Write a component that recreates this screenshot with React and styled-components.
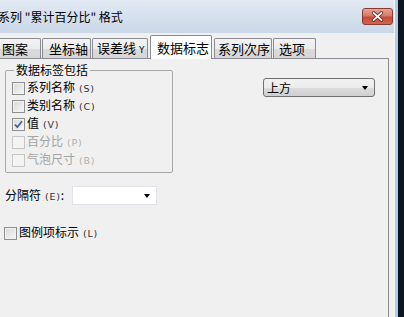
import { createGlobalStyle, styled } from "styled-components";

const GlobalStyle = createGlobalStyle`
  html, body {
    margin: 0;
    padding: 0;
    background: #f0f0f0;
  }
  body {
    font-family: "Noto Sans CJK SC", "Noto Sans", sans-serif;
    font-size: 12px;
    color: #000;
  }
`;

const Window = styled.div`
  width: 404px;
  height: 317px;
  display: flex;
  overflow: hidden;
`;

const Main = styled.div`
  width: 394px;
  display: flex;
  flex-direction: column;
`;

const RightFrame = styled.div`
  width: 10px;
  background: linear-gradient(
    to right,
    #f4f7fb 0 1px,
    #aecbe8 1px 4px,
    #0c1622 4px
  );
`;

const TitleBar = styled.div`
  height: 33px;
  flex: none;
  display: flex;
  align-items: center;
  background: linear-gradient(#e2eaf4, #c9d7e7);
`;

const Title = styled.div`
  margin-left: -2px;
  margin-top: 1px;
  font-size: 12px;
  line-height: 14px;
  white-space: nowrap;
`;

const CloseButton = styled.div`
  margin-left: auto;
  margin-right: 1px;
  margin-top: -1px;
  width: 31px;
  height: 17px;
  box-sizing: border-box;
  border: 1px solid #8b3b32;
  border-radius: 3px;
  background: linear-gradient(#e6a595 0%, #d67a68 45%, #c74b38 55%, #d0654f 100%);
  display: flex;
  align-items: center;
  justify-content: center;
`;

const Client = styled.div`
  flex: 1;
  background: #f0f0f0;
  overflow: hidden;
`;

const TabControl = styled.div`
  margin: 2px 5px 0 -5px;
  display: flex;
  flex-direction: column;
`;

const TabStrip = styled.div`
  height: 23px;
  display: flex;
  align-items: flex-end;
  gap: 1px;
  position: relative;
  z-index: 1;
`;

const Tab = styled.div`
  width: ${(p) => p.$w}px;
  height: ${(p) => (p.$sel ? 24 : 20)}px;
  margin: 0 ${(p) => (p.$sel ? "1px" : "0")} ${(p) => (p.$sel ? "-1px" : "0")};
  box-sizing: border-box;
  border: 1px solid #898c95;
  border-bottom: none;
  border-radius: 2px 2px 0 0;
  padding-left: ${(p) => p.$pl}px;
  display: flex;
  align-items: center;
  font-size: 13px;
  line-height: 14px;
  white-space: nowrap;
  overflow: hidden;
  background: ${(p) =>
    p.$sel ? "#ffffff" : "linear-gradient(#f3f3f3, #ebebeb 50%, #dcdcdc 51%, #d6d6d6)"};
  padding-top: ${(p) => (p.$sel ? 0 : 1)}px;
`;

const TabSuffix = styled.span`
  font-family: "DejaVu Sans", sans-serif;
  font-size: 9px;
  margin-left: 3px;
`;

const Panel = styled.div`
  margin-left: 3px;
  height: 280px;
  border: 1px solid #898c95;
  padding: 5px 0 0 6px;
  box-sizing: border-box;
  background: #f0f0f0;
`;

const TopRow = styled.div`
  display: flex;
  align-items: flex-start;
`;

const GroupBox = styled.fieldset`
  margin: 0;
  width: 168px;
  box-sizing: border-box;
  padding: 3px 0 3px 6px;
  border: 1px solid #a9a9a9;
  border-radius: 2px;
  min-width: 0;
`;

const GroupTitle = styled.legend`
  margin-left: 2px;
  padding: 0 2px;
  font-size: 12px;
  line-height: 12px;
`;

const CheckRow = styled.div`
  height: 18px;
  display: flex;
  align-items: center;
  gap: 2px;
  color: ${(p) => (p.$disabled ? "#a3a3a3" : "#000")};
  font-size: 12px;
  line-height: 14px;
  white-space: nowrap;
`;

const Box = styled.span`
  width: 13px;
  height: 13px;
  box-sizing: border-box;
  flex: none;
  border: 1px solid ${(p) => (p.$disabled ? "#c6c6c6" : "#8e8f8f")};
  background: ${(p) =>
    p.$disabled ? "#f4f4f4" : "linear-gradient(135deg, #d9d9d9, #f7f7f7)"};
  box-shadow: inset 0 0 0 1px ${(p) => (p.$disabled ? "#f4f4f4" : "#f2f2f2")};
  display: flex;
  align-items: center;
  justify-content: center;
`;

const Key = styled.span`
  font-family: "DejaVu Sans", sans-serif;
  font-size: 9.5px;
  letter-spacing: 0.8px;
  margin-left: 4px;
  color: ${(p) => (p.$disabled ? "#b0b0b0" : "#333")};
`;

const PositionSelect = styled.div`
  margin: 14px 13px 0 auto;
  width: 112px;
  height: 19px;
  box-sizing: border-box;
  border: 1px solid #707070;
  border-radius: 3px;
  background: linear-gradient(#f2f2f2, #ebebeb 50%, #dddddd 51%, #cfcfcf);
  display: flex;
  align-items: center;
  padding: 0 6px 0 3px;
  font-size: 12px;
  line-height: 14px;
`;

const Arrow = styled.span`
  margin-left: auto;
  width: 0;
  height: 0;
  border-left: 3.5px solid transparent;
  border-right: 3.5px solid transparent;
  border-top: 4px solid #000;
`;

const SepRow = styled.div`
  margin-top: 13px;
  display: flex;
  align-items: center;
`;

const SepLabel = styled.div`
  width: 67px;
  font-size: 12px;
  line-height: 14px;
  white-space: nowrap;
`;

const SepSelect = styled.div`
  width: 85px;
  height: 19px;
  box-sizing: border-box;
  border: 1px solid #e2e3ea;
  background: #ffffff;
  display: flex;
  align-items: center;
  padding: 0 6px 0 3px;
`;

const LegendRow = styled(CheckRow)`
  margin-top: 19px;
  margin-left: -1px;
`;

function CheckBox({ checked, disabled }) {
  return (
    <Box $disabled={disabled}>
      {checked && (
        <svg width="11" height="11" viewBox="0 0 11 11">
          <path d="M2 5.5 L4.3 8.2 L9 2.3" fill="none" stroke="#4a5e9c" strokeWidth="1.8" />
        </svg>
      )}
    </Box>
  );
}

const tabs = [
  { label: "图案", w: 46, pl: 6 },
  { label: "坐标轴", w: 49, pl: 6 },
  { label: "误差线", suffix: "Y", w: 56, pl: 4 },
  { label: "数据标志", w: 62, pl: 6, sel: true },
  { label: "系列次序", w: 58, pl: 3 },
  { label: "选项", w: 43, pl: 5 },
];

const items = [
  { label: "系列名称", key: "(S)" },
  { label: "类别名称", key: "(C)" },
  { label: "值", key: "(V)", checked: true },
  { label: "百分比", key: "(P)", disabled: true },
  { label: "气泡尺寸", key: "(B)", disabled: true },
];

export default function App() {
  return (
    <>
      <GlobalStyle />
      <Window>
        <Main>
          <TitleBar>
            <Title>系列 "累计百分比" 格式</Title>
            <CloseButton>
              <svg width="13" height="11" viewBox="0 0 13 11">
                <path
                  d="M2.5 1.8 L10.5 9.2 M10.5 1.8 L2.5 9.2"
                  stroke="#6a2a20"
                  strokeWidth="3.4"
                  strokeLinecap="round"
                />
                <path
                  d="M2.5 1.8 L10.5 9.2 M10.5 1.8 L2.5 9.2"
                  stroke="#ffffff"
                  strokeWidth="1.8"
                  strokeLinecap="round"
                />
              </svg>
            </CloseButton>
          </TitleBar>
          <Client>
            <TabControl>
              <TabStrip>
                {tabs.map((t) => (
                  <Tab key={t.label} $w={t.w} $pl={t.pl} $sel={t.sel}>
                    <span>
                      {t.label}
                      {t.suffix && <TabSuffix>{t.suffix}</TabSuffix>}
                    </span>
                  </Tab>
                ))}
              </TabStrip>
              <Panel>
                <TopRow>
                  <GroupBox>
                    <GroupTitle>数据标签包括</GroupTitle>
                    {items.map((it) => (
                      <CheckRow key={it.label} $disabled={it.disabled}>
                        <CheckBox checked={it.checked} disabled={it.disabled} />
                        <span>
                          {it.label}
                          <Key $disabled={it.disabled}>{it.key}</Key>
                        </span>
                      </CheckRow>
                    ))}
                  </GroupBox>
                  <PositionSelect>
                    上方
                    <Arrow />
                  </PositionSelect>
                </TopRow>
                <SepRow>
                  <SepLabel>
                    分隔符<Key>(E)</Key>:
                  </SepLabel>
                  <SepSelect>
                    <Arrow />
                  </SepSelect>
                </SepRow>
                <LegendRow>
                  <CheckBox />
                  <span>
                    图例项标示<Key>(L)</Key>
                  </span>
                </LegendRow>
              </Panel>
            </TabControl>
          </Client>
        </Main>
        <RightFrame />
      </Window>
    </>
  );
}
